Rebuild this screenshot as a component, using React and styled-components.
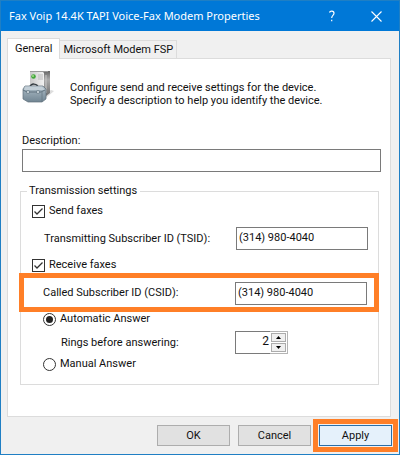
import React, { useState } from 'react'
import styled, { createGlobalStyle } from 'styled-components'

const ACCENT = '#0078d7'
const MARK = '#ff7f27'
const FACE = '#f0f0f0'
const LINE = '#dcdcdc'
const FIELD_LINE = '#7a7a7a'
const UI_FONT = "Roboto, 'Liberation Sans', sans-serif"

const GlobalStyle = createGlobalStyle`
  *, *::before, *::after {
    box-sizing: border-box;
  }
  body {
    margin: 0;
    font: 11px/14px ${UI_FONT};
    color: #111;
  }
  button, input {
    font: inherit;
    color: inherit;
  }
`

const Dialog = styled.div`
  display: flex;
  flex-direction: column;
  min-height: 100vh;
  border: 1px solid #1f7fc4;
  background: ${FACE};
`
const TitleBar = styled.header`
  display: flex;
  align-items: center;
  height: 30px;
  padding-left: 8px;
  background: ${ACCENT};
  color: #fff;
`
const Title = styled.h1`
  flex: 1;
  margin: 0;
  font: 11px/16px 'Noto Sans', 'Open Sans', sans-serif;
  white-space: nowrap;
`
const TitleButton = styled.button`
  display: grid;
  place-items: center;
  width: 45px;
  height: 30px;
  padding: 0;
  border: 0;
  background: none;
`
const Body = styled.main`
  flex: 1;
  display: flex;
  flex-direction: column;
  padding: 7px 8px 8px 6px;
`
const TabList = styled.div`
  display: flex;
  align-items: flex-end;
`
const Tab = styled.button`
  height: ${p => (p.$active ? 21 : 18)}px;
  margin-bottom: ${p => (p.$active ? -1 : 0)}px;
  padding: ${p => (p.$active ? '0 7px' : '1px 3px 0')};
  border: 1px solid ${LINE};
  border-width: ${p => (p.$active ? '1px 1px 0' : '1px 1px 0 0')};
  background: ${p => (p.$active ? '#fff' : FACE)};
  position: relative;
  white-space: nowrap;
`
const Panel = styled.section`
  flex: 1;
  padding-top: 11px;
  border: 1px solid ${LINE};
  background: #fff;
`
const Intro = styled.div`
  display: flex;
  gap: 16px;
  padding: 0 9px 0 14px;
`
const IntroText = styled.p`
  margin: 0;
  padding-top: 11px;
  line-height: 13px;
`
const Description = styled.div`
  display: flex;
  flex-direction: column;
  gap: 1px;
  padding: 27px 9px 0 14px;
`
const TextBox = styled.input`
  width: 100%;
  height: 23px;
  padding: 0 2px 2px;
  border: 1px solid ${FIELD_LINE};
  border-radius: 0;
  background: #fff;
  outline: 0;
`
const Group = styled.fieldset`
  min-width: 0;
  margin: 12px 11px 31px 12px;
  padding: 6px 0 13px;
  border: 1px solid ${LINE};
`
const Legend = styled.legend`
  margin-left: 6px;
  padding: 0 3px 0 2px;
`
const Choice = styled.label`
  display: flex;
  align-items: center;
  gap: 4px;
  width: fit-content;
  height: 14px;
  margin-left: ${p => p.$indent}px;
`
const Row = styled.div`
  display: flex;
  align-items: center;
  margin: ${p => p.$margin};
  padding-left: ${p => p.$indent}px;
`
const MarkedRow = styled(Row)`
  height: 29px;
  outline: 5px solid ${MARK};
`
const RowLabel = styled.label`
  flex: 1;
  padding-top: 1px;
  white-space: nowrap;
`
const FieldCell = styled.div`
  flex: 0 0 ${p => p.$width}px;
`
const CheckBox = styled.span`
  display: grid;
  flex: none;
  width: 13px;
  height: 13px;
  & > * {
    grid-area: 1 / 1;
  }
  input {
    appearance: none;
    width: 13px;
    height: 13px;
    margin: 0;
    border: 1px solid #333;
    background: #fff;
  }
  svg {
    visibility: hidden;
    pointer-events: none;
    z-index: 1;
  }
  input:checked + svg {
    visibility: visible;
  }
`
const RadioButton = styled.input`
  appearance: none;
  flex: none;
  display: grid;
  place-items: center;
  width: 13px;
  height: 13px;
  margin: 0;
  border: 1px solid #333;
  border-radius: 50%;
  background: #fff;
  &:checked::before {
    content: '';
    width: 7px;
    height: 7px;
    border-radius: 50%;
    background: #222;
  }
`
const Spinner = styled.div`
  display: flex;
  width: 53px;
  height: 23px;
`
const SpinnerInput = styled.input`
  flex: 1;
  min-width: 0;
  padding: 0 1px 3px;
  border: 1px solid ${FIELD_LINE};
  border-right: 0;
  border-radius: 0;
  background: #fff;
  font-size: 12px;
  text-align: right;
  outline: 0;
`
const SpinnerButtons = styled.div`
  display: grid;
  grid-template-rows: 1fr 1fr;
  gap: 1px;
  width: 18px;
  padding: 1px;
  border: 1px solid #b4b4b4;
  border-left: 0;
  background: #fff;
`
const StepButton = styled.button`
  display: grid;
  place-items: center;
  min-height: 0;
  padding: 0;
  border: 1px solid #acacac;
  background: ${FACE};
`
const Footer = styled.footer`
  display: flex;
  justify-content: flex-end;
  gap: 8px;
  padding-top: 8px;
  margin-right: -1px;
`
const PushButton = styled.button`
  width: 73px;
  height: 21px;
  padding: 0;
  border: 1px solid ${p => (p.$marked ? '#2a6fa8' : '#adadad')};
  background: ${p => (p.$marked ? '#e5f1fb' : '#e1e1e1')};
  ${p => (p.$marked ? `
    outline: 5px solid ${MARK};
    outline-offset: 1px;
  ` : '')}
`

const DeviceIcon = () => (
  <svg width="32" height="34" viewBox="0 0 32 34" aria-hidden="true">
    <defs>
      <linearGradient id="front" x1="0" x2="1">
        <stop offset="0" stopColor="#c9c9c9" />
        <stop offset="1" stopColor="#f1f1f1" />
      </linearGradient>
      <linearGradient id="side" x1="0" y1="0" x2="0" y2="1">
        <stop offset="0" stopColor="#666" />
        <stop offset=".35" stopColor="#aaa" />
        <stop offset="1" stopColor="#707070" />
      </linearGradient>
      <linearGradient id="box" x1="0" y1="0" x2="0" y2="1">
        <stop offset="0" stopColor="#aebdc7" />
        <stop offset="1" stopColor="#718593" />
      </linearGradient>
    </defs>
    <path d="M24 28 32 21 29 20 24 23z" fill="#ddd" />
    <path d="M8 1h20v22l-4 3H8z" fill="url(#side)" />
    <path d="M8 2h13l1 1v23H8z" fill="url(#front)" />
    <path d="M8 1h18v1H8z" fill="#999" />
    <path d="M16 5h5M16 7h5M16 9h5" stroke="#bbb" strokeWidth="1" />
    <path d="M24 5v18" stroke="#c8c8c8" strokeWidth="1" />
    <circle cx="11.500" cy="6.500" r="2.300" fill="#41a83a" />
    <circle cx="11" cy="6" r="1" fill="#a4dc8e" />
    <path d="M8 17c0-4 8-4 8 1" fill="none" stroke="#333b41" strokeWidth="1.500" />
    <path d="M3 16h18l3 3v10l-4 3H6l-5-3V19z" fill="url(#box)" stroke="#5e6f7a" strokeWidth=".7" />
    <path d="M3 16.500h17l3 3.500H2z" fill="#c3cfd7" />
    <path d="M1 20l4 2h14l4-2" fill="none" stroke="#536672" strokeWidth=".8" />
    <path d="M20 22v10" stroke="#617480" strokeWidth=".7" />
    <path d="M5 20.500h2v3H5zM15 20.500h2v3h-2z" fill="#e4ebef" stroke="#536672" strokeWidth=".5" />
  </svg>
)

const Check = ({ label, indent, checked, onChange }) => (
  <Choice $indent={indent}>
    <CheckBox>
      <input type="checkbox" checked={checked} onChange={onChange} />
      <svg width="13" height="13" viewBox="0 0 13 13" aria-hidden="true">
        <path d="M2.500 6.500 5 9l5.500-5.500" fill="none" stroke="#333" strokeWidth="1.300" />
      </svg>
    </CheckBox>
    {label}
  </Choice>
)

const Radio = ({ label, indent, checked, onChange }) => (
  <Choice $indent={indent}>
    <RadioButton type="radio" name="answer" checked={checked} onChange={onChange} />
    {label}
  </Choice>
)

const App = () => {
  const [send, setSend] = useState(true)
  const [receive, setReceive] = useState(true)
  const [answer, setAnswer] = useState('auto')
  const [rings, setRings] = useState(2)

  return (
    <Dialog>
      <GlobalStyle />
      <TitleBar>
        <Title>Fax Voip 14.4K TAPI Voice-Fax Modem Properties</Title>
        <TitleButton aria-label="Help">
          <svg width="8" height="12" viewBox="0 0 8 12" fill="none" stroke="#fff" strokeWidth="1.200">
            <path d="M1.500 2.500C2 .500 6 .500 6 3.200 6 5.500 3.700 5.300 3.700 8M3.700 9.800v1.400" />
          </svg>
        </TitleButton>
        <TitleButton aria-label="Close">
          <svg width="11" height="11" viewBox="0 0 11 11" stroke="#fff" strokeWidth="1.100">
            <path d="M.500.500l10 10M10.500.500l-10 10" />
          </svg>
        </TitleButton>
      </TitleBar>
      <Body>
        <TabList role="tablist">
          <Tab role="tab" aria-selected="true" $active>General</Tab>
          <Tab role="tab" aria-selected="false">Microsoft Modem FSP</Tab>
        </TabList>
        <Panel role="tabpanel">
          <Intro>
            <DeviceIcon />
            <IntroText>
              Configure send and receive settings for the device.<br />
              Specify a description to help you identify the device.
            </IntroText>
          </Intro>
          <Description>
            <label htmlFor="description">Description:</label>
            <TextBox id="description" type="text" />
          </Description>
          <Group>
            <Legend>Transmission settings</Legend>
            <Check label="Send faxes" indent={11} checked={send} onChange={() => setSend(!send)} />
            <Row $margin="9px 10px 8px 0" $indent={23}>
              <RowLabel htmlFor="tsid">Transmitting Subscriber ID (TSID):</RowLabel>
              <FieldCell $width={132}>
                <TextBox id="tsid" type="text" defaultValue="(314) 980-4040" />
              </FieldCell>
            </Row>
            <Check label="Receive faxes" indent={11} checked={receive} onChange={() => setReceive(!receive)} />
            <MarkedRow $margin="6px 4px 5px 3px" $indent={19}>
              <RowLabel htmlFor="csid">Called Subscriber ID (CSID):</RowLabel>
              <FieldCell $width={139}>
                <Row $margin="2px 7px 0 0" $indent={0}>
                  <TextBox id="csid" type="text" defaultValue="(314) 980-4040" />
                </Row>
              </FieldCell>
            </MarkedRow>
            <Radio label="Automatic Answer" indent={22} checked={answer === 'auto'} onChange={() => setAnswer('auto')} />
            <Row $margin="5px 0 3px" $indent={40}>
              <RowLabel htmlFor="rings">Rings before answering:</RowLabel>
              <FieldCell $width={143}>
                <Spinner>
                  <SpinnerInput
                    id="rings"
                    type="text"
                    inputMode="numeric"
                    value={rings}
                    onChange={e => setRings(Number(e.target.value) || 0)}
                  />
                  <SpinnerButtons>
                    <StepButton aria-label="More rings" onClick={() => setRings(rings + 1)}>
                      <svg width="5" height="3" viewBox="0 0 5 3"><path d="M0 3 2.500 0 5 3z" /></svg>
                    </StepButton>
                    <StepButton aria-label="Fewer rings" onClick={() => setRings(Math.max(0, rings - 1))}>
                      <svg width="5" height="3" viewBox="0 0 5 3"><path d="M0 0h5L2.500 3z" /></svg>
                    </StepButton>
                  </SpinnerButtons>
                </Spinner>
              </FieldCell>
            </Row>
            <Radio label="Manual Answer" indent={22} checked={answer === 'manual'} onChange={() => setAnswer('manual')} />
          </Group>
        </Panel>
        <Footer>
          <PushButton>OK</PushButton>
          <PushButton>Cancel</PushButton>
          <PushButton $marked>Apply</PushButton>
        </Footer>
      </Body>
    </Dialog>
  )
}

export default App
